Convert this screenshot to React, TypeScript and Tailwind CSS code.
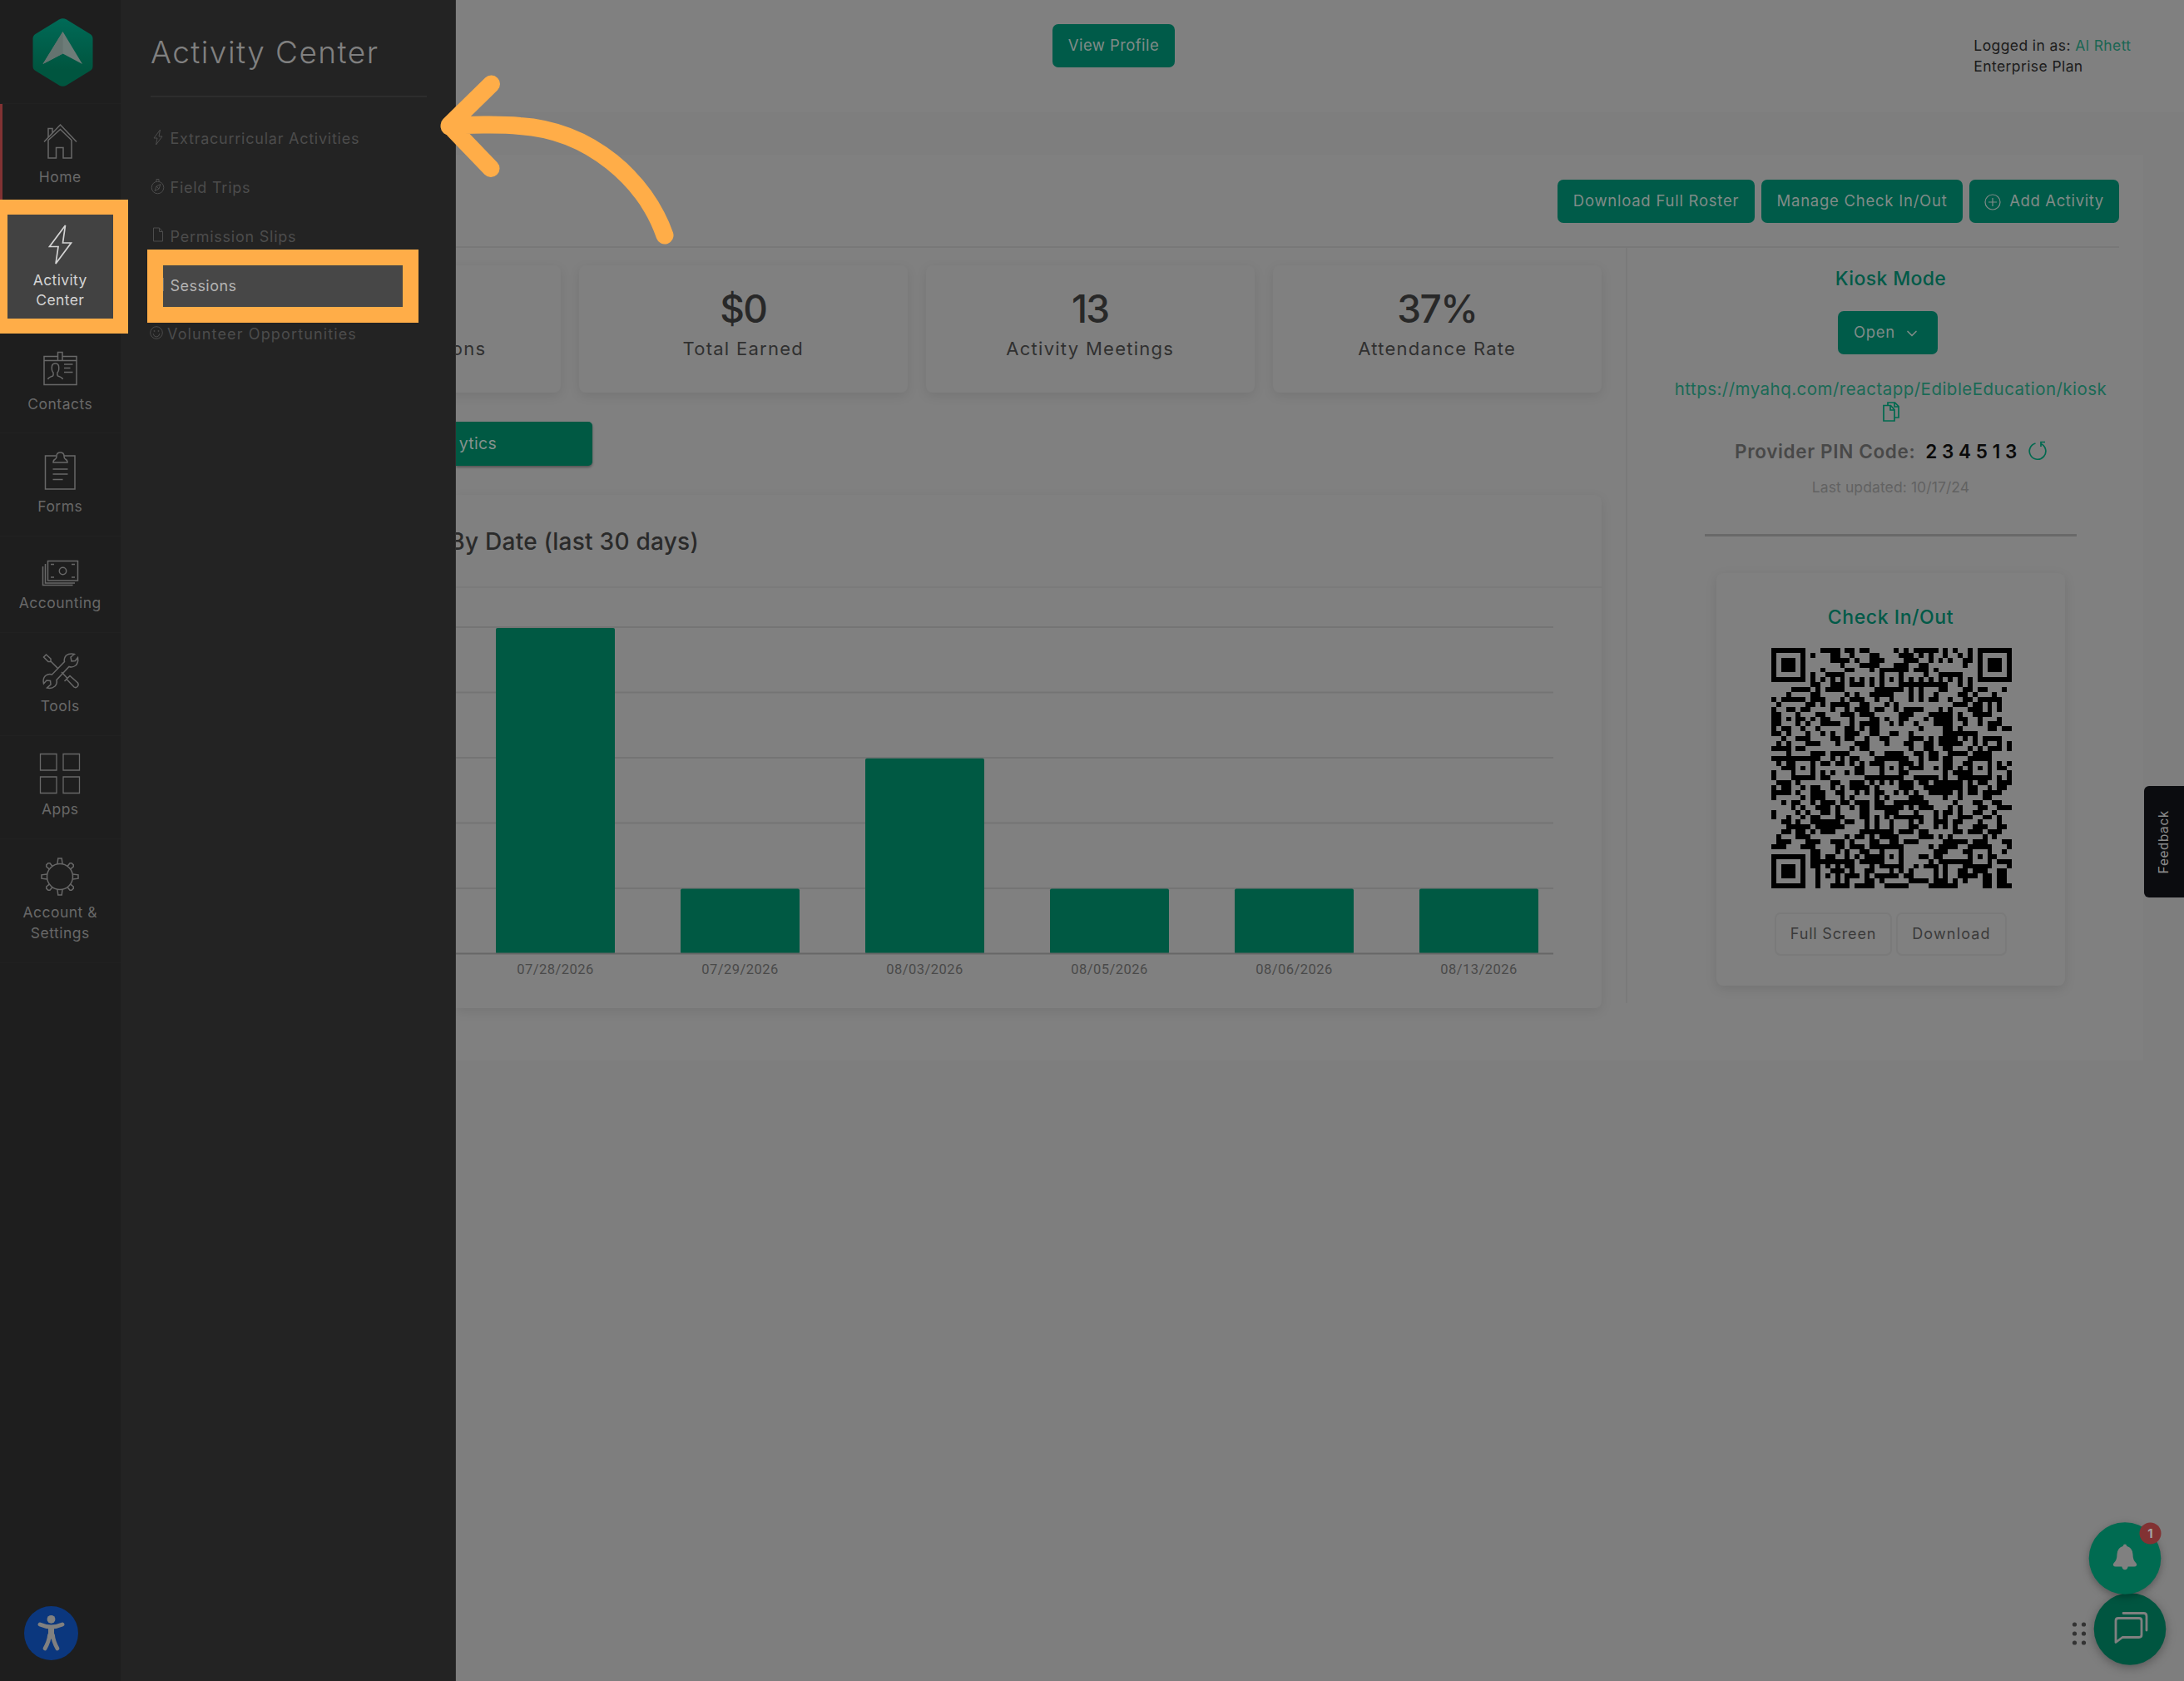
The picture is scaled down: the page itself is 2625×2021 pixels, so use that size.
import React from 'react';
import { ChevronDown } from 'lucide-react';

const qrRows = [
  '0-6 10-13 15-16 18-19 25 27 29-33 35 37 40 42-48',
  '0 6 8 12-13 16 20-21 26-28 30 32 35 38 40 42 48',
  '0 2-4 6 12-15 17 20-22 27-29 32 34 36 39-40 42 44-46 48',
  '0 2-4 6 14 18-21 25-27 30-31 39 42 44-46 48',
  '0 2-4 6 10 15-16 20 22-27 29-31 33 42 44-46 48',
  '0 6 8 11-14 22 26 31 34-38 42 48',
  '0-6 8 10 12 14 16 18 20 22 24 26 28 30 32 34 36 38 40 42-48',
  '8-9 12-14 16-18 20 22 26-35 38 40',
  '4-7 9 11-14 21-26 28 30 34-35 39-40 42-43 47',
  '3 8-9 15 17 20-24 28 30 33 38-39 41 45',
  '0 2-6 8-10 14 16-18 21 24 28 30 32-33 36 39-40 42-46',
  '1 7-8 10 12-15 18-19 23 25 37-39 41-42 44 46',
  '0 3-4 6-7 12 15 17-19 21-22 25 27-30 34 36 40-42 44 46',
  '0-1 5 9-10 14-16 18-20 26-28 32-36 38 41-44',
  '0-1 3 5-6 8 10-11 16 20-21 23 26-27 31 33-36 38-39 42 46',
  '0-1 5 7 10-13 16 18-21 24 26 29 33-36 39 42 44-46',
  '0 2-3 6 9 15-16 18 20-21 30 35-36 38 44-45 47-48',
  '0-1 3 7 10 12 15-17 20-21 24-25 28 35-41',
  '2 5-7 12-13 15-16 19 22-23 28-30 32 34-37 39 41 43-46',
  '1 3 7-9 13 17-19 23 27-28 31-32 34-38 41 43 46 48',
  '0-3 5-6 16 18-19 28 31-32 35-36 40 42 44-46 48',
  '3 8-10 12-15 20 23-26 29-30 32-33 36-39 41-44',
  '0-9 12 14 16-17 21-27 30 32-33 35-36 40-44',
  '1 3-4 8 10-11 13-14 16 18 20-22 26-28 30 35-36 39-40 44 46 48',
  '2-4 6 8 17-18 22 24 26 28-30 33 35-36 38 40 42 44 46-47',
  '0 4 8 10 12 15 17-18 22 26-27 35 37-40 44 48',
  '0 4-8 10-11 19-26 29-33 35 38-44 46 48',
  '1-3 5 12-13 16-18 20 22 24 26-28 30-31 33-38 40 42-43 46-48',
  '0 2-3 6 8-9 12 14 16-19 21 26-28 31-38 40-41 44 46-47',
  '0-3 5 8-10 13-14 17 19 21-22 25 27 29 32-36 38 40-41 43-46',
  '0 6 8-10 14 16 21 23 28-30 35 38 43-44',
  '2 4-5 8 10-12 14-15 17-19 21-22 25-31 37 41-42 45-46',
  '4 6 9-11 13 16 18-19 21-26 28 30-32 36 38 42-43 46-48',
  '0 5 7 10-11 13 18-19 23-25 29 33 35-36 38 41-42 45',
  '0 3 6 8-9 13-14 18-19 21 23 25-30 33 35 38-40 43-44 46',
  '2-3 5 8-13 15-16 19 21 24 28 30 33-35 37-38 42 46',
  '3-7 9-14 19 21 24 28-29 33 35 37 41-43 46-47',
  '2-3 5-6 8 10-12 18-24 26-28 30-31 37-38 40-42 44-46',
  '1 5-7 15 17-18 20 22-25 30-32 34 36 43 45',
  '1-3 7-9 12-14 16 20-21 24-25 27-29 35-39 41-43 47-48',
  '0-2 6-8 13-14 16-18 20-26 32 34-37 40-44 48',
  '8-9 13 15 18-19 22 26 33-35 39-40 44 47',
  '0-6 8-9 11-12 15 17 19-22 24 26 30-31 33-34 40 42 44-45',
  '0 6 8-16 18-22 26 32 34-40 44 46-48',
  '0 2-4 6 8-9 11 13 15-16 20 22-26 29 31-33 35 39-44 48',
  '0 2-4 6 9 12-14 16 19-20 24 26 28 33 35 38-39 41-43 46-47',
  '0 2-4 6 9 11 13 15-17 19 21-25 27-28 33 35 38-41 43-44 46-47',
  '0 6 9 13 15 19-20 22 28-31 33-35 37 39 43-44 46-47',
  '0-6 9 12-15 17-20 23-27 32-37 43-44 46-48',
];

const QrCode: React.FC = () => (
  <svg className="w-[289px] h-[289px] ml-px" viewBox="0 0 49 49" shapeRendering="crispEdges">
    {qrRows.map((row, y) =>
      row.split(' ').map((run) => {
        const [start, end = start] = run.split('-').map(Number);
        return <rect key={`${y}-${run}`} x={start} y={y} width={end - start + 1} height={1} />;
      })
    )}
  </svg>
);

const Logo: React.FC = () => (
  <svg className="w-[73px] h-[82px]" viewBox="0 0 73 82">
    <defs>
      <linearGradient id="logo" x1="0" y1="0" x2="0" y2="1">
        <stop offset="0" stopColor="#006a57" />
        <stop offset="0.75" stopColor="#00553f" />
      </linearGradient>
    </defs>
    <path
      d="M32 1.5q4.500-2.500 9 0L69.500 19q3 2 3 5.500v33q0 3.500-3 5.500L41 80.500q-4.500 2.500-9 0L3.500 63q-3-2-3-5.500v-33q0-3.500 3-5.500z"
      fill="url(#logo)"
    />
    <path d="M36.500 16 60 55 36.500 42.500 12.500 55z" fill="#6d7c78" />
    <path d="M36.500 16v26.500L12.500 55z" fill="#64736f" />
  </svg>
);

const HomeIcon: React.FC = () => (
  <svg className="w-[50px] h-[50px]" viewBox="0 0 50 50" fill="none" stroke="currentColor" strokeWidth="1.5">
    <path d="M6 25.500 25.500 5 45 25.500M11 20V9.500h5v5.500" />
    <path d="M11 23.500V45h9.500V32.500h8.500V45h10V23.500L25.500 10.500z" />
  </svg>
);

const BoltIcon: React.FC = () => (
  <svg className="w-[50px] h-[50px]" viewBox="0 0 50 50" fill="none" stroke="currentColor" strokeWidth="1.700">
    <path d="M31.500 2 12.500 27.500h10.500L20 48l18.500-25H28.500z" />
  </svg>
);

const ContactsIcon: React.FC = () => (
  <svg className="w-[50px] h-[50px]" viewBox="0 0 50 50" fill="none" stroke="currentColor" strokeWidth="1.500">
    <path d="M22.500 10.500H6v34h39v-34H28M6 15.500h16.500M28 15.500h17M22.500 5.500H28V15.500h-5.500z" />
    <path d="M10.500 38q1-2.500 6-4 1-1 .500-4-2.500-3-1.500-8 .500-3 4-3t4 3q1 5-1.500 8-.500 3 .500 4 5 1.500 6 4M30 20h10.500M30 24.500h7.500M30 29.500h10.500" />
  </svg>
);

const FormsIcon: React.FC = () => (
  <svg className="w-[50px] h-[50px]" viewBox="0 0 50 50" fill="none" stroke="currentColor" strokeWidth="1.500">
    <path d="M20.500 7H7.500v40h35.500v-40H30" />
    <path d="M17 15q0-3 2.500-4 1.500-1 1.500-3.500 0-4.500 4.500-4.500T30 7.500q0 2.500 1.500 3.500 2.500 1 2.500 4zM16.500 23h18M16.500 29h18M16.500 35.500h12" />
  </svg>
);

const MoneyIcon: React.FC = () => (
  <svg className="w-[50px] h-[42px]" viewBox="0 0 50 42" fill="none" stroke="currentColor" strokeWidth="1.500">
    <path d="M10.500 9.500h36v23.500h-36zM7.500 13v23H43M4.500 16v22.500H40.500M14 13.500h4M39 13.500h4M14 29h4M39 29h4" />
    <circle cx="28.500" cy="21.500" r="4.200" />
  </svg>
);

const ToolsIcon: React.FC = () => (
  <svg className="w-[50px] h-[50px]" viewBox="0 0 50 50" fill="none" stroke="currentColor" strokeWidth="1.500">
    <path d="M5.500 9 8.500 6l5.500 5v3.500H11zM13.500 13.500 23 23M27 27l6.500 7M30.500 38l7-7M33 35.500l9 9.500q2 1.500 4-.500t.500-4.500L37 31.500" />
    <path d="M42.500 5.500 38 9l1 5 4.500-.500 3-4q1 6-2.500 9.500-4 3-8 1.500L21 36.500q1 4.500-2 7.500-4 3.500-9.500 2L14 42l-.500-4.500-4.500-.500-3.500 4q-1.500-6 2-9.500 4-3 8-1.500L30.500 14.500q-1-4 2-7.500 4-3 10-1.500z" />
  </svg>
);

const AppsIcon: React.FC = () => (
  <svg className="w-[50px] h-[50px]" viewBox="0 0 50 50" fill="none" stroke="currentColor" strokeWidth="1.300">
    <path d="M1.500 1.500h19.500v19.500H1.500zM29 1.500h19.500v19.500H29zM1.500 29h19.500v19.500H1.500zM29 29h19.500v19.500H29z" />
  </svg>
);

const GearIcon: React.FC = () => (
  <svg className="w-[50px] h-[50px]" viewBox="0 0 50 50" fill="none" stroke="currentColor" strokeWidth="1.500">
    <circle cx="25" cy="25" r="15.500" />
    {[0, 90, 180, 270].map((angle) => (
      <path key={angle} d="M22 9.500l.800-6.500h4.400l.800 6.500" transform={`rotate(${angle} 25 25)`} />
    ))}
    {[45, 135, 225, 315].map((angle) => (
      <path key={angle} d="M22.500 9.500 22 5l1.500-1.500h3L28 5l-.500 4.500" transform={`rotate(${angle} 25 25)`} />
    ))}
  </svg>
);

interface NavItemProps {
  icon: React.ReactNode;
  label: React.ReactNode;
}

const NavItem: React.FC<NavItemProps> = ({ icon, label }) => (
  <div className="flex flex-col items-center gap-[6px] pt-[20px] pb-[22.100px] border-b border-[#212121] text-[#686868]">
    {icon}
    <span className="text-[17.500px] leading-[24.800px] text-center tracking-[0.027em]">{label}</span>
  </div>
);

const Sidebar: React.FC = () => (
  <nav className="relative w-[144.500px] shrink-0 bg-[#1e1e1e]">
    <div className="h-[125px] pl-[39px] pt-[21.500px] border-b border-[#212121]">
      <Logo />
    </div>
    <div className="relative">
      <div className="absolute left-0 top-0 w-[3px] h-[124px] bg-[#823233]" />
      <NavItem icon={<HomeIcon />} label="Home" />
    </div>
    <NavItem icon={<BoltIcon />} label={<>Activity<br />Center</>} />
    <NavItem icon={<ContactsIcon />} label="Contacts" />
    <NavItem icon={<FormsIcon />} label="Forms" />
    <NavItem icon={<MoneyIcon />} label="Accounting" />
    <NavItem icon={<ToolsIcon />} label="Tools" />
    <NavItem icon={<AppsIcon />} label="Apps" />
    <NavItem icon={<GearIcon />} label={<>Account &amp;<br />Settings</>} />

    <svg className="absolute left-[29px] top-[1931px] w-[65px] h-[65px]" viewBox="0 0 65 65">
      <circle cx="32.500" cy="32.500" r="32.500" fill="#0b377e" />
      <circle cx="32.500" cy="15.800" r="4.900" fill="#808080" />
      <path
        d="M19 22q7 3 13.500 3T46 22M32.500 25v12M30.500 35q-.500 7-5.500 16M34.500 35q.500 7 5.500 16"
        fill="none"
        stroke="#808080"
        strokeWidth="4.800"
        strokeLinecap="round"
      />
      <path d="M29 25h7v14h-7z" fill="#808080" />
    </svg>
  </nav>
);

const SubMenu: React.FC = () => (
  <div className="w-[403.500px] shrink-0 bg-[#232323] pl-[36.500px] pr-[34px] border-r border-[#2e2e2e]">
    <h1 className="pt-[38px] text-[37px] leading-[50px] font-light tracking-[0.039em] text-[#808080] whitespace-nowrap">
      Activity Center
    </h1>
    <div className="mt-[27px] h-[2px] bg-[#2d2d2d]" />
    <ul className="pt-[20.500px] text-[18px] text-[#4c4c4c] tracking-[0.042em] whitespace-nowrap">
      <li className="h-[58.700px] flex items-center pl-[2px]">
        <svg className="w-[14px] h-[20px] mr-[7.500px] -mt-[3px]" viewBox="0 0 14 20" fill="none" stroke="currentColor">
          <path d="M9.500 1 2 11h4l-1.500 8L12 9H8z" />
        </svg>
        Extracurricular Activities
      </li>
      <li className="h-[58.700px] flex items-center">
        <svg className="w-[17px] h-[20px] mr-[6.500px] -mt-[4px]" viewBox="0 0 17 20" fill="none" stroke="currentColor">
          <circle cx="8.500" cy="11.500" r="7.300" />
          <path d="M7 4V1.500h3V4M12 7.500l-2 5.500-5 2.500 2-5.500zM7 10l3 3" />
        </svg>
        Field Trips
      </li>
      <li className="h-[58.700px] flex items-center pl-[3px]">
        <svg className="w-[12px] h-[18px] mr-[8.500px] -mt-[4px]" viewBox="0 0 12 18" fill="none" stroke="currentColor">
          <path d="M.500 1h7L11.500 5.500v11.500H.500zM7.500 1v4.500h4" />
        </svg>
        Permission Slips
      </li>
      <li className="h-[58.700px]" />
      <li className="h-[58.700px] flex items-center -ml-px tracking-[0.063em]">
        <svg className="w-[16px] h-[16px] mr-[5px] -mt-[4px]" viewBox="0 0 16 16" fill="none" stroke="currentColor">
          <circle cx="8" cy="8" r="7.300" />
          <path d="M4 9q1 4 4 4t4-4" />
          <circle cx="5.500" cy="6" r=".600" />
          <circle cx="10.500" cy="6" r=".600" />
        </svg>
        Volunteer Opportunities
      </li>
    </ul>
  </div>
);

const buttonClass =
  'h-[52px] rounded-[7px] bg-[#005b49] text-[#808b88] text-[18.500px] flex items-center justify-center whitespace-nowrap';

interface StatProps {
  value: string;
  label: string;
}

const StatCard: React.FC<StatProps> = ({ value, label }) => (
  <div className="w-[395.500px] h-[152.500px] shrink-0 rounded-[8px] bg-[#808080] shadow-[0_4px_14px_rgba(0,0,0,0.090)] text-center text-[#282828]">
    <div className="pt-[23.500px] text-[46px] leading-[56px] font-medium tracking-[-0.035em]">{value}</div>
    <div className="text-[22px] leading-[40px] tracking-[0.058em] text-[#303030]">{label}</div>
  </div>
);

const bars = [
  { date: '07/28/2026', count: 5 },
  { date: '07/29/2026', count: 1 },
  { date: '08/03/2026', count: 3 },
  { date: '08/05/2026', count: 1 },
  { date: '08/06/2026', count: 1 },
  { date: '08/13/2026', count: 1 },
];

const Chart: React.FC = () => (
  <svg className="w-[1378px] h-[504px] block" viewBox="0 0 1378 504">
    {[0, 1, 2, 3, 4].map((i) => (
      <rect key={i} x="0" y={46 + i * 78.500} width="1319" height="2" fill="#747474" />
    ))}
    {bars.map((bar, i) => (
      <g key={bar.date}>
        <rect x={48 + i * 222} y={440 - bar.count * 78.400} width="143" height={bar.count * 78.400} rx="2" fill="#005943" />
        <text
          x={119.500 + i * 222}
          y="464"
          textAnchor="middle"
          fill="#4a4a4a"
          className="font-[Roboto,sans-serif] text-[16.500px] tracking-[0.450px]"
        >
          {bar.date}
        </text>
      </g>
    ))}
    <rect x="0" y="438.500" width="1319" height="2" fill="#666666" />
  </svg>
);

const KioskPanel: React.FC = () => (
  <div className="w-[591px] pl-[42px] flex flex-col items-center text-[#005a48]">
    <h2 className="mt-[22px] text-[23px] leading-[30px] font-medium tracking-[0.016em]">Kiosk Mode</h2>
    <button className={`${buttonClass} mt-[24px] mr-[7px] w-[120px] pr-[8px] gap-[10px] tracking-[0.036em]`}>
      Open
      <ChevronDown className="w-[20px] h-[20px] -mr-[6px] mt-[3px]" strokeWidth={2} />
    </button>
    <a className="mt-[27.500px] text-[20.500px] leading-[30px] tracking-[0.023em] text-[#1a6a56] whitespace-nowrap">
      https://myahq.com/reactapp/EdibleEducation/kiosk
    </a>
    <svg className="w-[20px] h-[24px]" viewBox="0 0 20 24" fill="none" stroke="#00694f" strokeWidth="1.700">
      <path d="M1 4.500h8.500l4.500 5V23H1zM9 4.500V10h5" />
      <path d="M6 4.500V1h8.500L19 5.500V19h-5M14 1v5h5" />
    </svg>
    <div className="mt-[20px] flex items-center text-[22.500px] leading-[32px] font-semibold text-[#484848] whitespace-nowrap">
      <span className="tracking-[0.029em]">Provider PIN Code:</span>
      <span className="ml-[12px] tracking-[0.255em] text-[#0a0a0a]">234513</span>
      <svg className="ml-[8px] w-[22px] h-[24px] -mt-[3px]" viewBox="0 0 22 24" fill="none" stroke="#00694f" strokeWidth="1.700">
        <path d="M8.500 3A9.800 9.800 0 1 0 15 3.500M20 1.500h-5v5.500" />
      </svg>
    </div>
    <p className="mt-[13px] text-[17.500px] leading-[28px] tracking-[0.006em] text-[#626262]">Last updated: 10/17/24</p>
    <div className="mt-[41.500px] w-[447px] h-[3px] bg-[#696969]" />
    <div className="mt-[44.500px] w-[419px] h-[496px] rounded-[8px] bg-[#808080] shadow-[0_4px_14px_rgba(0,0,0,0.100)] flex flex-col items-center">
      <h2 className="mt-[38px] mb-[21.500px] text-[23px] leading-[30px] font-medium tracking-[0.025em]">Check In/Out</h2>
      <QrCode />
      <div className="mt-[29px] flex gap-[5px] text-[18px] text-[#3a3a3a] tracking-[0.045em]">
        <button className="w-[141px] h-[52px] rounded-[7px] border-2 border-[#7a7a7a]">Full Screen</button>
        <button className="w-[133px] h-[52px] rounded-[7px] border-2 border-[#7a7a7a] tracking-[0.065em]">Download</button>
      </div>
    </div>
  </div>
);

const Main: React.FC = () => (
  <main className="w-[2077px] overflow-hidden bg-[#7e7e7e]">
    <header className="h-[135px] pl-[717px] pr-[63.500px] flex justify-between bg-[#808080]">
      <button className={`${buttonClass} mt-[29px] w-[147px] tracking-[0.023em]`}>View Profile</button>
      <div className="mt-[42px] text-[17.500px] leading-[25px] tracking-[0.023em] text-[#1b1b1b]">
        <p>
          Logged in as: <span className="text-[#1a6653]">Al Rhett</span>
        </p>
        <p>Enterprise Plan</p>
      </div>
    </header>

    <section className="mt-[51px] w-[2028px] h-[1089px] pr-[29px] bg-[#808080]">
      <div className="h-[111.500px] flex justify-end gap-[8px] pt-[29.500px] border-b-2 border-[#787878] tracking-[0.047em]">
        <button className={`${buttonClass} w-[237px]`}>Download Full Roster</button>
        <button className={`${buttonClass} w-[242px]`}>Manage Check In/Out</button>
        <button className={`${buttonClass} w-[180px] gap-[10px] tracking-[0.034em]`}>
          <svg className="w-[20px] h-[20px] mt-[3px]" viewBox="0 0 20 20" fill="none" stroke="currentColor" strokeWidth="1.200">
            <circle cx="10" cy="10" r="9" />
            <path d="M10 5v10M5 10h10" />
          </svg>
          Add Activity
        </button>
      </div>

      <div className="flex">
        <div className="w-[1408px] h-[908px] shrink-0 pt-[21.500px] pr-[29px] border-r-2 border-[#7a7a7a]">
          <div className="flex justify-end gap-[21.500px]">
            <StatCard value="6" label="Total Registrations" />
            <StatCard value="$0" label="Total Earned" />
            <StatCard value="13" label="Activity Meetings" />
            <StatCard value="37%" label="Attendance Rate" />
          </div>

          <div className="mt-[35.500px] w-[164px] h-[53px] pr-[115px] flex items-center justify-end rounded-r-[5px] bg-[#005943] shadow-[0_2px_3px_rgba(0,0,0,0.350)] text-[19.500px] tracking-[0.015em] text-[#84918d]">
            ytics
          </div>

          <div className="mt-[35px] h-[617px] rounded-r-[8px] bg-[#808080] shadow-[0_4px_14px_rgba(0,0,0,0.090)]">
            <div className="h-[112px] border-b-2 border-[#7a7a7a] flex items-center">
              <h2 className="w-[292px] mt-[2px] flex justify-end text-[28px] leading-[40px] font-medium tracking-[0.009em] text-[#2a2a2a] whitespace-nowrap">
                By Date (last 30 days)
              </h2>
            </div>
            <Chart />
          </div>
        </div>
        <KioskPanel />
      </div>
    </section>
  </main>
);

const App: React.FC = () => {
  return (
    <div className="relative w-[2625px] h-[2021px] flex overflow-hidden font-[Inter,sans-serif]">
      <Sidebar />
      <SubMenu />
      <Main />

      {/* Highlighted nav entry */}
      <div className="absolute left-0 top-[240px] w-[153.500px] h-[161px] border-y-[18.500px] border-r-[18.500px] border-l-[9.500px] border-[#ffad48] bg-[#424242] text-[#d4d4d4] flex flex-col items-center">
        <div className="mt-[11px]"><BoltIcon /></div>
        <span className="mt-[5.500px] text-[17.500px] leading-[24.800px] text-center tracking-[0.020em]">
          Activity
          <br />
          Center
        </span>
      </div>

      {/* Highlighted submenu entry */}
      <div className="absolute left-[177px] top-[299.500px] w-[326px] h-[88px] border-[19px] border-[#ffad48] bg-[#474747] flex items-center text-[18px] text-[#b4b4b4] tracking-[0.025em]">
        <div className="w-px h-[16px] -mt-[4px] bg-[#6c6c6c]" />
        <span className="ml-[7.500px] -mt-px">Sessions</span>
      </div>

      <svg className="absolute left-[520px] top-[80px] w-[300px] h-[220px]" viewBox="0 0 300 220" fill="none" stroke="#ffad48" strokeWidth="21" strokeLinecap="round" strokeLinejoin="round">
        <path d="M70.500 21 20 70.500 70 122.500M20 72C40 70 80 69 105 71.500 190 77 256 137 279 203" />
      </svg>

      <div className="absolute right-0 top-[945px] w-[48px] h-[134px] rounded-l-[6px] bg-[#0b0c0f] flex items-center justify-center">
        <span className="-rotate-90 text-[16.500px] font-[Roboto,sans-serif] tracking-[0.040em] text-[#8a8a8a]">Feedback</span>
      </div>

      <svg className="absolute right-0 top-[1810px] w-[160px] h-[211px]" viewBox="0 0 160 211">
        <g fill="#333333">
          <circle cx="28.500" cy="143" r="2.600" />
          <circle cx="39.500" cy="143" r="2.600" />
          <circle cx="28.500" cy="154" r="2.600" />
          <circle cx="39.500" cy="154" r="2.600" />
          <circle cx="28.500" cy="165" r="2.600" />
          <circle cx="39.500" cy="165" r="2.600" />
        </g>
        <circle className="drop-shadow-[0_3px_6px_rgba(0,0,0,0.300)]" cx="95" cy="148.500" r="43.300" fill="#005540" />
        <circle className="drop-shadow-[0_3px_5px_rgba(0,0,0,0.300)]" cx="89" cy="63.500" r="43.300" fill="#006b51" />
        <path
          d="M89 46.500q2 0 2.200 2.300 7 2 7.300 10 0 6.700 3.500 10 2 2 .700 3.700-.700 1-2.500 1h-7.500q-.700 3.700-3.700 3.700t-3.700-3.700h-7.500q-1.800 0-2.500-1-1.300-1.700.700-3.700 3.500-3.300 3.500-10 .300-8 7.300-10 .200-2.300 2.200-2.300z"
          fill="#808080"
        />
        <circle cx="119.500" cy="33.500" r="13" fill="#823233" />
        <text x="119.500" y="39" textAnchor="middle" fill="#a3a3a3" className="text-[15px] font-bold font-[Inter,sans-serif]">1</text>
        <path
          d="M78 164.500v-26q0-3 3-3h25q3 0 3 3v17q0 3-3 3H86zM87 129.500h24.500q3.500 0 3.500 3.500v17"
          fill="none"
          stroke="#808080"
          strokeWidth="2.800"
          strokeLinecap="round"
          strokeLinejoin="round"
        />
      </svg>
    </div>
  );
};

export default App;
